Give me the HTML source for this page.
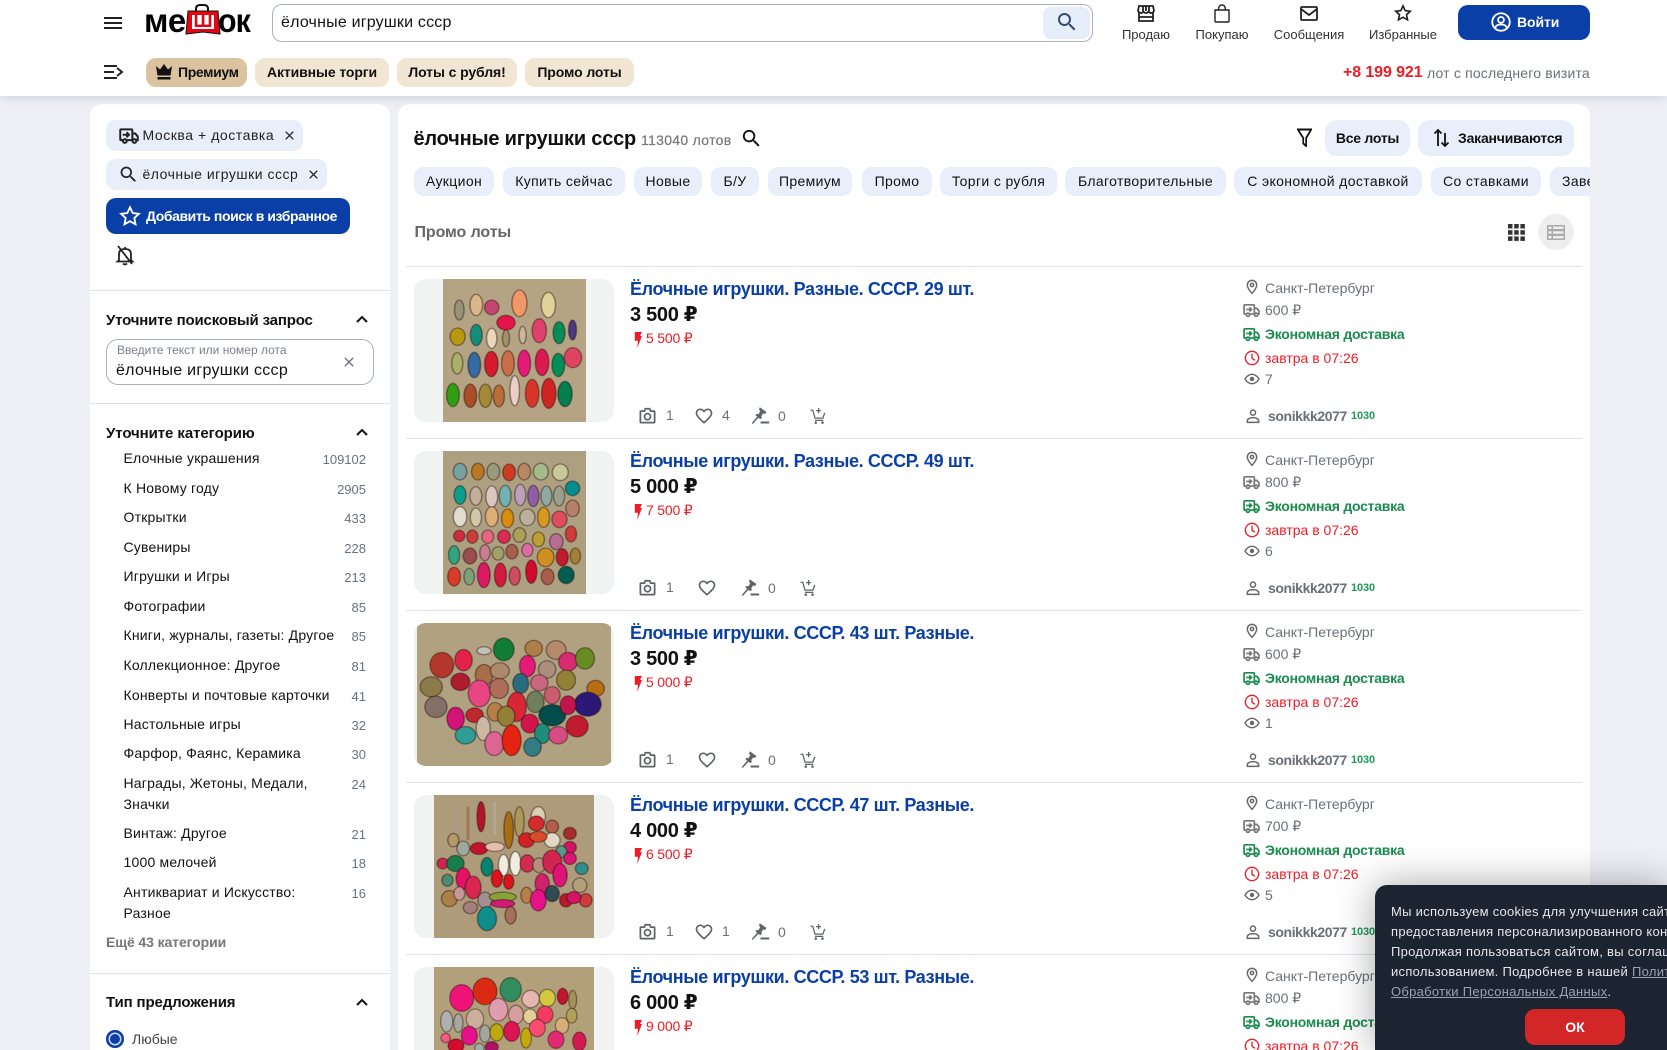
<!DOCTYPE html>
<html lang="ru"><head><meta charset="utf-8"><title>ёлочные игрушки ссср</title>
<style>
*{box-sizing:border-box}
html,body{margin:0;padding:0;width:1667px;height:1050px;overflow:hidden;background:#eef0f6;font-family:"Liberation Sans","DejaVu Sans",sans-serif;color:#111}
#p{position:relative;width:1667px;height:1050px;overflow:hidden}
.a,.t,.row>svg,svg.a{position:absolute}
.t{white-space:nowrap;line-height:20px;font-size:14px}
.b{font-weight:bold}
.hdr{position:absolute;left:0;top:0;width:1667px;height:96px;background:#fff;box-shadow:0 2px 10px rgba(30,40,70,.14);z-index:3}
.panel{position:absolute;background:#fff;border-radius:12px 12px 0 0}
.pill{position:absolute;border-radius:10px;height:29px;text-align:center;line-height:29px;font-size:14px;font-weight:bold;white-space:nowrap;letter-spacing:-.1px}
.sep{position:absolute;height:1px;background:#dfe2ec}
.chip{position:absolute;top:7px;height:29px;background:#e8effb;border-radius:10px;text-align:center;line-height:29px;font-size:14px;white-space:nowrap;letter-spacing:.36px}
.cat{left:123.500px;width:220px;white-space:normal;color:#111;letter-spacing:.2px}
.n{right:1301px;color:#6a7080;font-size:13px}
.row{position:absolute;left:0;width:1667px;height:172px;overflow:hidden}
.imgb{position:absolute;left:414px;top:13px;width:200px;height:143px;background:#f1f3f3;border-radius:12px;overflow:hidden}
.imgb svg{position:absolute;top:0;filter:saturate(1.15)}
.imgb ellipse{stroke:rgba(35,12,12,.4);stroke-width:4}
.ti{left:630px;top:12px;font-size:18px;font-weight:bold;color:#0b3fa8;line-height:22px;letter-spacing:-.37px}
.pr{left:630px;top:38px;font-size:20px;font-weight:bold;line-height:22px;letter-spacing:-.3px}
.old{left:646px;top:62px;color:#ee1c25;letter-spacing:-.2px}
.g{color:#6b6f76}
.c{left:1265px}
.un{left:1268px;top:140px;letter-spacing:-.4px}
.rt{left:1351px;top:140px;font-size:11px;font-weight:bold;color:#1d9a5a;letter-spacing:-.1px}
.ic{fill:none;stroke:#666;stroke-width:1.8}
.ck{left:16px;font-size:13px;color:#e5e7eb;letter-spacing:.28px}
</style></head><body><div id="p">
<svg width="0" height="0" style="position:absolute"><defs>
<symbol id="search" viewBox="0 0 24 24"><path fill="currentColor" d="M15.5 14h-.79l-.28-.27A6.47 6.47 0 0 0 16 9.5 6.5 6.5 0 1 0 9.5 16c1.61 0 3.09-.59 4.23-1.57l.27.28v.79l5 4.99L20.49 19l-4.99-5zm-6 0C7.01 14 5 11.99 5 9.5S7.01 5 9.5 5 14 7.01 14 9.5 11.99 14 9.5 14z"/></symbol>
<symbol id="heart" viewBox="0 0 24 24"><path fill="#5f6368" d="M16.5 3c-1.74 0-3.41.81-4.5 2.09C10.91 3.81 9.24 3 7.5 3 4.42 3 2 5.42 2 8.5c0 3.78 3.4 6.86 8.55 11.54L12 21.35l1.45-1.32C18.6 15.36 22 12.28 22 8.5 22 5.42 19.58 3 16.5 3zm-4.4 15.55l-.1.1-.1-.1C7.14 14.24 4 11.39 4 8.5 4 6.5 5.5 5 7.5 5c1.54 0 3.04.99 3.57 2.36h1.87C13.46 5.99 14.96 5 16.5 5c2 0 3.5 1.5 3.5 3.5 0 2.89-3.14 5.74-7.9 10.05z"/></symbol>
<symbol id="cam" viewBox="0 0 24 24"><g fill="none" stroke="#5f6368" stroke-width="2.200"><path d="M3 7.5a1 1 0 0 1 1-1h4l1.2-3h5.6l1.2 3h4a1 1 0 0 1 1 1V20a1 1 0 0 1-1 1H4a1 1 0 0 1-1-1z"/><circle cx="12" cy="13.5" r="3.8"/></g></symbol>
<symbol id="gavel" viewBox="0 0 24 24"><g fill="#5f6368"><path d="M11 1.5l8.5 6-1.8 2.6-2.2-.8-2.6 3.7 1 2-2.4 1.6-6-5 1.7-1.8 2 .7 2.4-3.8-1.4-2z"/><path d="M8.6 12.4l1.7 1.5L2.2 22.8 1 21.4z"/><rect x="12" y="19.5" width="11" height="2.6" rx=".5"/></g></symbol>
<symbol id="cart" viewBox="0 0 24 24"><g fill="none" stroke="#5f6368" stroke-width="1.7"><path d="M2 5h3l3 10.5h10.5l2.5-7"/><path d="M8 18.5h11M12.8 2v7M9.5 5.5h6.6"/></g><circle cx="9" cy="21.5" r="1.7" fill="#5f6368"/><circle cx="18" cy="21.5" r="1.7" fill="#5f6368"/></symbol>
<symbol id="bolt" viewBox="0 0 12 20"><path fill="#ee1c25" d="M2 0h9L8.5 5H11L5 20l1-9H2z"/></symbol>
<symbol id="pin" viewBox="0 0 24 24"><g fill="none" stroke="currentColor" stroke-width="2.200"><path d="M12 21.5s-7-7.2-7-12.5a7 7 0 0 1 14 0c0 5.300-7 12.500-7 12.500z"/><circle cx="12" cy="9" r="2.500"/></g></symbol>
<symbol id="truck" viewBox="0 0 24 24"><g fill="none" stroke="currentColor" stroke-width="2.400"><path d="M5 17H2.500a1 1 0 0 1-1-1V5a1 1 0 0 1 1-1H15a1 1 0 0 1 1 1v12H9"/><path d="M16 9h3.500l3 3.500V17H20.500M16 17h.5"/><circle cx="7" cy="18" r="2.300"/><circle cx="18.500" cy="18" r="2.300"/><path d="M4.500 10.500h7M9 7.500l3 3-3 3"/></g></symbol>
<symbol id="clock" viewBox="0 0 24 24"><g fill="none" stroke="currentColor" stroke-width="2"><circle cx="12" cy="12" r="10"/><path d="M12 5.500v7l4.500 3"/></g></symbol>
<symbol id="eye" viewBox="0 0 24 24"><path fill="none" stroke="currentColor" stroke-width="2" d="M1.500 12S5.500 5 12 5s10.500 7 10.500 7-4 7-10.500 7S1.500 12 1.500 12z"/><circle cx="12" cy="12" r="3.300" fill="currentColor"/></symbol>
<symbol id="user" viewBox="0 0 24 24"><g fill="none" stroke="currentColor" stroke-width="2.200"><circle cx="12" cy="7" r="3.800"/><path d="M3.500 21.500v-2.500c0-2.800 4.500-4.500 8.500-4.500s8.500 1.700 8.500 4.500v2.500z"/></g></symbol>
<symbol id="x" viewBox="0 0 24 24"><path fill="none" stroke="currentColor" stroke-width="2.400" d="M5 5l14 14M19 5L5 19"/></symbol>
<symbol id="chev" viewBox="0 0 12 8"><path fill="none" stroke="#111" stroke-width="2" d="M1 7l5-5 5 5"/></symbol>
</defs></svg>

<div class="panel" style="left:90px;top:104px;width:300px;height:946px"></div>
<div class="panel" style="left:398px;top:104px;width:1192px;height:946px"></div>

<!-- header -->
<div class="hdr">
<div class="a" style="left:104px;top:17px;width:18px;height:2px;background:#222;box-shadow:0 5px 0 #222,0 10px 0 #222"></div>
<div class="t b" style="left:144px;top:2px;font-size:33px;line-height:38px;letter-spacing:-.5px;color:#000;transform-origin:0 0">ме</div>
<div class="t b" style="left:218px;top:2px;font-size:33px;line-height:38px;letter-spacing:-1px;color:#000;transform:scaleX(.92);transform-origin:0 0">ок</div>
<svg class="a" style="left:184px;top:3px" width="38" height="33" viewBox="0 0 38 33"><path d="M12 9V6q0-4 4-4h4q4 0 4 4v3" fill="none" stroke="#111" stroke-width="2"/><path d="M4 8h30l2 23-17-2-17 2z" fill="#e30613" stroke="#111" stroke-width="1"/><rect x="8" y="12" width="22" height="14" fill="#fff"/><text x="19" y="24" text-anchor="middle" font-size="19" font-weight="bold" fill="#e30613" font-family="Liberation Sans, sans-serif">Ш</text></svg>

<div class="a" style="left:272px;top:4px;width:821px;height:38px;border:1px solid #aab0c0;border-radius:10px;background:#fff"></div>
<div class="t" style="left:281px;top:12px;font-size:16px;letter-spacing:.2px;line-height:22px">ёлочные игрушки ссср</div>
<div class="a" style="left:1043px;top:7px;width:47px;height:32px;background:#e6eefb;border-radius:8px"></div>
<svg class="a" style="left:1055px;top:10px;color:#334a70" width="24" height="24"><use href="#search"/></svg>

<svg class="a ic" style="left:1137px;top:5px;stroke:#222" width="18" height="17" viewBox="0 0 18 17"><path d="M2 1h14l1 5q-1 2-2.700 2t-2.600-1.500Q10.500 8 9 8T6.300 6.500Q5.500 8 3.700 8T1 6z"/><path d="M2 8v8h14V8M6 1v5M9 1v5M12 1v5M2 12h14"/></svg>
<svg class="a ic" style="left:1213px;top:4px;stroke:#222;stroke-width:1.400" width="18" height="19" viewBox="0 0 18 19"><path d="M2 6h14v11a1 1 0 0 1-1 1H3a1 1 0 0 1-1-1zM5.500 6q0-5 3.500-5t3.500 5"/></svg>
<svg class="a ic" style="left:1300px;top:6px;stroke:#222" width="18" height="15" viewBox="0 0 18 15"><rect x="1" y="1" width="16" height="13" rx="1"/><path d="M1 3l8 6 8-6"/></svg>
<svg class="a ic" style="left:1394px;top:4px;stroke:#222" width="18" height="18" viewBox="0 0 24 24"><path stroke-width="2.200" d="M12 2.500l2.900 6.300 6.800.8-5 4.700 1.300 6.800-6-3.400-6 3.400 1.300-6.800-5-4.700 6.800-.8z"/></svg>
<div class="t" style="left:1096px;width:100px;text-align:center;top:25px;font-size:13px;color:#333">Продаю</div>
<div class="t" style="left:1172px;width:100px;text-align:center;top:25px;font-size:13px;color:#333">Покупаю</div>
<div class="t" style="left:1259px;width:100px;text-align:center;top:25px;font-size:13px;color:#333">Сообщения</div>
<div class="t" style="left:1353px;width:100px;text-align:center;top:25px;font-size:13px;color:#333">Избранные</div>
<div class="a" style="left:1458px;top:5px;width:132px;height:35px;background:#0b3fa8;border-radius:10px"></div>
<svg class="a" style="left:1491px;top:12px" width="20" height="20" viewBox="0 0 24 24"><g fill="none" stroke="#fff" stroke-width="2.200"><circle cx="12" cy="12" r="10.500"/><circle cx="12" cy="9.500" r="3.500"/><path d="M5 19q1-4 7-4t7 4"/></g></svg>
<div class="t b" style="left:1517px;top:12px;color:#fff;letter-spacing:-.1px">Войти</div>

<svg class="a" style="left:104px;top:64px" width="20" height="16" viewBox="0 0 20 16"><path fill="none" stroke="#222" stroke-width="2" d="M0 2h13M0 8h10M0 14h13M13 4l5 4-5 4"/></svg>
<div class="pill" style="left:146px;top:58px;width:101px;background:#dcc3a0;text-align:left;padding-left:32px;letter-spacing:-.35px">Премиум</div>
<svg class="a" style="left:156px;top:64px" width="16" height="16" viewBox="0 0 16 16"><path fill="#111" d="M0 2l4 3.500L8 0l4 5.500L16 2l-1.500 9.500h-13zM1.500 13h13v2.500h-13z"/></svg>
<div class="pill" style="left:255px;top:58px;width:134px;background:#f1e5d4">Активные торги</div>
<div class="pill" style="left:397px;top:58px;width:120px;background:#f1e5d4">Лоты с рубля!</div>
<div class="pill" style="left:525px;top:58px;width:109px;background:#f1e5d4">Промо лоты</div>
<div class="t b" style="left:1343px;top:63px;font-size:16px;color:#ee1c25;letter-spacing:-.1px">+8 199 921</div>
<div class="t g" style="left:1427px;top:63px;letter-spacing:.18px">лот с последнего визита</div>
</div>

<!-- left panel content -->
<div class="a" style="left:106px;top:120px;width:197px;height:31px;background:#e8effb;border-radius:10px"></div>
<svg class="a" style="left:119px;top:126px;color:#222" width="20" height="20"><use href="#truck"/></svg>
<div class="t" style="left:142.500px;top:125px;color:#222;letter-spacing:.55px">Москва + доставка</div>
<svg class="a" style="left:283px;top:129px;color:#222" width="13" height="13"><use href="#x"/></svg>
<div class="a" style="left:106px;top:159px;width:221px;height:31px;background:#e8effb;border-radius:10px"></div>
<svg class="a" style="left:118px;top:164px;color:#222" width="21" height="21"><use href="#search"/></svg>
<div class="t" style="left:142.500px;top:164px;color:#222;letter-spacing:.5px">ёлочные игрушки ссср</div>
<svg class="a" style="left:307px;top:168px;color:#222" width="13" height="13"><use href="#x"/></svg>
<div class="a" style="left:106px;top:198px;width:244px;height:36px;background:#0b3fa8;border-radius:10px"></div>
<svg class="a" style="left:119px;top:205px" width="22" height="22" viewBox="0 0 24 24"><path fill="none" stroke="#fff" stroke-width="2" d="M12 2.500l2.900 6.300 6.800.8-5 4.700 1.300 6.800-6-3.400-6 3.400 1.300-6.800-5-4.700 6.800-.8z"/></svg>
<div class="t b" style="left:146px;top:206px;color:#fff;letter-spacing:-.42px">Добавить поиск в избранное</div>
<svg class="a" style="left:115px;top:245px" width="20" height="21" viewBox="0 0 20 21"><path fill="none" stroke="#222" stroke-width="1.800" d="M4 15V9q0-5 6-5t6 5v6l1.500 1.500h-15zM8 18.500q2 2 4 0M10 4V2M3 1l14 18"/></svg>

<div class="sep" style="left:90px;top:290px;width:300px"></div>
<div class="t b" style="left:106px;top:311px;font-size:15px;color:#111;letter-spacing:-.17px">Уточните поисковый запрос</div>
<svg class="a" style="left:356px;top:315px" width="12" height="8"><use href="#chev"/></svg>
<div class="a" style="left:106px;top:339px;width:268px;height:46px;border:1px solid #aab0c0;border-radius:12px"></div>
<div class="t" style="left:117px;top:340px;font-size:12px;color:#7a8090">Введите текст или номер лота</div>
<div class="t" style="left:116px;top:361px;font-size:16px;letter-spacing:.27px">ёлочные игрушки ссср</div>
<svg class="a" style="left:342px;top:355px;color:#6d7585" width="14" height="14"><use href="#x"/></svg>
<div class="sep" style="left:90px;top:403px;width:300px"></div>
<div class="t b" style="left:106px;top:424px;font-size:15px;letter-spacing:-.08px">Уточните категорию</div>
<svg class="a" style="left:356px;top:428px" width="12" height="8"><use href="#chev"/></svg>

<div class="t cat" style="top:448px">Елочные украшения</div><div class="t n" style="top:450px">109102</div>
<div class="t cat" style="top:478px">К Новому году</div><div class="t n" style="top:480px">2905</div>
<div class="t cat" style="top:507px">Открытки</div><div class="t n" style="top:509px">433</div>
<div class="t cat" style="top:537px">Сувениры</div><div class="t n" style="top:539px">228</div>
<div class="t cat" style="top:566px">Игрушки и Игры</div><div class="t n" style="top:568px">213</div>
<div class="t cat" style="top:596px">Фотографии</div><div class="t n" style="top:598px">85</div>
<div class="t cat" style="top:625px">Книги, журналы, газеты: Другое</div><div class="t n" style="top:627px">85</div>
<div class="t cat" style="top:655px">Коллекционное: Другое</div><div class="t n" style="top:657px">81</div>
<div class="t cat" style="top:685px">Конверты и почтовые карточки</div><div class="t n" style="top:687px">41</div>
<div class="t cat" style="top:714px">Настольные игры</div><div class="t n" style="top:716px">32</div>
<div class="t cat" style="top:743px">Фарфор, Фаянс, Керамика</div><div class="t n" style="top:745px">30</div>
<div class="t cat" style="top:773px;line-height:21px;width:214px">Награды, Жетоны, Медали,<br>Значки</div><div class="t n" style="top:775px">24</div>
<div class="t cat" style="top:823px">Винтаж: Другое</div><div class="t n" style="top:825px">21</div>
<div class="t cat" style="top:852px">1000 мелочей</div><div class="t n" style="top:854px">18</div>
<div class="t cat" style="top:882px;line-height:21px;width:214px">Антиквариат и Искусство:<br>Разное</div><div class="t n" style="top:884px">16</div>
<div class="t b" style="left:106px;top:932px;color:#777;letter-spacing:-.1px">Ещё 43 категории</div>
<div class="sep" style="left:90px;top:973px;width:300px"></div>
<div class="t b" style="left:106px;top:993px;font-size:15px;letter-spacing:-.12px">Тип предложения</div>
<svg class="a" style="left:356px;top:998px" width="12" height="8"><use href="#chev"/></svg>
<div class="a" style="left:106px;top:1030px;width:18px;height:18px;border-radius:50%;background:#0b3fa8;box-shadow:inset 0 0 0 2.500px #0b3fa8,inset 0 0 0 4px #cfdcf5"></div>
<div class="t" style="left:132px;top:1029px;color:#444">Любые</div>

<!-- main head -->
<div class="t b" style="left:413.500px;top:129px;font-size:20px;letter-spacing:-.2px">ёлочные игрушки ссср</div>
<div class="t b" style="left:641px;top:130px;color:#777;font-size:14px;font-weight:normal;-webkit-text-stroke:.2px #777;letter-spacing:.3px">113040 лотов</div>
<svg class="a" style="left:740px;top:127px;color:#111" width="23" height="23"><use href="#search"/></svg>
<svg class="a" style="left:1297px;top:128px" width="15" height="19" viewBox="0 0 18 19" preserveAspectRatio="none"><path fill="none" stroke="#111" stroke-width="2" d="M1 1.500h16L11 10v8l-3.500-2.500V10z"/></svg>
<div class="pill" style="left:1325px;top:120px;width:85px;height:36px;line-height:36px;background:#e8effb;border-radius:12px;letter-spacing:-.25px">Все лоты</div>
<div class="pill" style="left:1418px;top:120px;width:156px;height:36px;line-height:36px;background:#e8effb;border-radius:12px;text-align:left;padding-left:40px;letter-spacing:-.2px">Заканчиваются</div>
<svg class="a" style="left:1433px;top:128px" width="16" height="20" viewBox="0 0 16 20"><path fill="none" stroke="#111" stroke-width="1.800" d="M5 18V2M1.500 5.500L5 2l3.500 3.500M12 5v13M8.500 14.500L12 18l3.500-3.500"/></svg>

<div class="a" style="left:398px;top:160px;width:1192px;height:42px;overflow:hidden">
<div class="chip" style="left:16px;width:80px">Аукцион</div>
<div class="chip" style="left:105px;width:122px">Купить сейчас</div>
<div class="chip" style="left:236px;width:68px">Новые</div>
<div class="chip" style="left:313px;width:48px">Б/У</div>
<div class="chip" style="left:370px;width:84px">Премиум</div>
<div class="chip" style="left:464px;width:70px">Промо</div>
<div class="chip" style="left:542px;width:117px">Торги с рубля</div>
<div class="chip" style="left:667px;width:161px">Благотворительные</div>
<div class="chip" style="left:836px;width:188px">С экономной доставкой</div>
<div class="chip" style="left:1033px;width:110px">Со ставками</div>
<div class="chip" style="left:1152px;width:110px;text-align:left;padding-left:12px">Завершённые</div>
</div>

<div class="t b" style="left:414.500px;top:223px;font-size:16px;color:#666;letter-spacing:-.1px">Промо лоты</div>
<svg class="a" style="left:1508px;top:224px" width="17" height="17" viewBox="0 0 17 17"><g fill="#333"><rect width="4.500" height="4.500"/><rect x="6.200" width="4.500" height="4.500"/><rect x="12.400" width="4.500" height="4.500"/><rect y="6.200" width="4.500" height="4.500"/><rect x="6.200" y="6.200" width="4.500" height="4.500"/><rect x="12.400" y="6.200" width="4.500" height="4.500"/><rect y="12.400" width="4.500" height="4.500"/><rect x="6.200" y="12.400" width="4.500" height="4.500"/><rect x="12.400" y="12.400" width="4.500" height="4.500"/></g></svg>
<div class="a" style="left:1538px;top:214px;width:36px;height:36px;border-radius:18px;background:#eeeeee"></div>
<svg class="a" style="left:1547px;top:225px" width="18" height="15" viewBox="0 0 18 15"><g fill="#aaa"><path d="M0 0h18v15H0zM1.500 1.500V4h3V1.500zm4.500 0V4h10.500V1.500zM1.500 6.200v2.600h3V6.200zm4.500 0v2.600h10.500V6.200zM1.500 11v2.500h3V11zm4.500 0v2.500h10.500V11z" fill-rule="evenodd"/></g></svg>

<div class="sep" style="left:406px;top:266px;width:1176px"></div>

<!-- ROW 1 -->
<div class="row" style="top:266px">
<div class="imgb"><svg style="left:29px" width="143" height="143" viewBox="109 57 361 429" preserveAspectRatio="none"><rect x="109" y="57" width="361" height="429" fill="#b3a488"/><g>
<ellipse cx="150" cy="150" rx="12" ry="30" fill="#97937a"/><ellipse cx="193" cy="135" rx="16" ry="32" fill="#d4b890"/><ellipse cx="232" cy="142" rx="18" ry="22" fill="#b8486e"/><ellipse cx="302" cy="130" rx="19" ry="40" fill="#e89a70"/><ellipse cx="375" cy="135" rx="18" ry="38" fill="#ded2a0"/>
<ellipse cx="146" cy="230" rx="19" ry="26" fill="#b49a22"/><ellipse cx="193" cy="225" rx="15" ry="32" fill="#1f8a7a"/><ellipse cx="232" cy="235" rx="13" ry="30" fill="#e8d8c0"/><ellipse cx="268" cy="188" rx="23" ry="22" fill="#d01a4a"/><ellipse cx="268" cy="235" rx="9" ry="25" fill="#a09070"/><ellipse cx="310" cy="225" rx="9" ry="26" fill="#c8b8a0"/><ellipse cx="352" cy="212" rx="18" ry="36" fill="#d0456a"/><ellipse cx="402" cy="218" rx="15" ry="33" fill="#0f8a5a"/><ellipse cx="436" cy="210" rx="10" ry="30" fill="#4a3a7a"/>
<ellipse cx="145" cy="310" rx="14" ry="32" fill="#a8b070"/><ellipse cx="188" cy="315" rx="16" ry="38" fill="#3a6a9a"/><ellipse cx="231" cy="312" rx="17" ry="38" fill="#c02030"/><ellipse cx="273" cy="310" rx="16" ry="38" fill="#c07050"/><ellipse cx="314" cy="310" rx="16" ry="40" fill="#d02070"/><ellipse cx="359" cy="307" rx="17" ry="40" fill="#c82050"/><ellipse cx="400" cy="315" rx="16" ry="35" fill="#0f8a5a"/><ellipse cx="437" cy="293" rx="22" ry="30" fill="#d04860"/>
<ellipse cx="134" cy="405" rx="16" ry="35" fill="#3a9a20"/><ellipse cx="178" cy="407" rx="16" ry="35" fill="#a05030"/><ellipse cx="216" cy="407" rx="16" ry="35" fill="#a08a40"/><ellipse cx="250" cy="408" rx="14" ry="33" fill="#b07040"/><ellipse cx="290" cy="392" rx="12" ry="45" fill="#e8d0c8"/><ellipse cx="334" cy="400" rx="17" ry="42" fill="#c83a30"/><ellipse cx="376" cy="400" rx="18" ry="45" fill="#c02828"/><ellipse cx="417" cy="402" rx="18" ry="38" fill="#0f7a50"/></g></svg></div>
<div class="t ti">Ёлочные игрушки. Разные. СССР. 29 шт.</div>
<div class="t pr">3 500 ₽</div>
<svg class="a" style="left:633px;top:66px" width="10" height="16"><use href="#bolt"/></svg><div class="t old">5 500 ₽</div>
<svg class="a" style="left:638px;top:140px" width="19" height="19"><use href="#cam"/></svg><div class="t g" style="left:666px;top:139px">1</div>
<svg class="a" style="left:694px;top:140px" width="20" height="20"><use href="#heart"/></svg><div class="t g" style="left:722px;top:139px">4</div>
<svg class="a" style="left:751px;top:140px" width="19" height="19"><use href="#gavel"/></svg><div class="t g" style="left:778px;top:140px">0</div>
<svg class="a" style="left:809px;top:140px" width="18" height="19"><use href="#cart"/></svg>
<svg class="a" style="left:1244px;top:13px;color:#666" width="16" height="16"><use href="#pin"/></svg><div class="t g c" style="top:12px">Санкт-Петербург</div>
<svg class="a" style="left:1243px;top:36px;color:#777" width="17" height="17"><use href="#truck"/></svg><div class="t g c" style="top:34px">600 ₽</div>
<svg class="a" style="left:1243px;top:60px;color:#1a8c4e" width="17" height="17"><use href="#truck"/></svg><div class="t c b" style="top:58px;color:#1a8c4e;letter-spacing:-.25px">Экономная доставка</div>
<svg class="a" style="left:1244px;top:84px;color:#ee1c25" width="16" height="16"><use href="#clock"/></svg><div class="t c" style="top:82px;color:#ee1c25">завтра в 07:26</div>
<svg class="a" style="left:1244px;top:105px;color:#666" width="16" height="16"><use href="#eye"/></svg><div class="t g c" style="top:103px">7</div>
<svg class="a" style="left:1245px;top:142px;color:#666" width="16" height="16"><use href="#user"/></svg><div class="t g b un">sonikkk2077</div><div class="t rt">1030</div>
</div>
<div class="sep" style="left:406px;top:438px;width:1176px"></div>

<!-- ROW 2 -->
<div class="row" style="top:438px">
<div class="imgb"><svg style="left:29px" width="143" height="143" viewBox="109 573 361 429" preserveAspectRatio="none"><rect x="109" y="573" width="361" height="429" fill="#aba084"/><g>
<ellipse cx="152" cy="635" rx="17" ry="25" fill="#7aa0a0"/><ellipse cx="197" cy="635" rx="16" ry="25" fill="#b07a30"/><ellipse cx="236" cy="635" rx="16" ry="25" fill="#9a9a80"/><ellipse cx="276" cy="637" rx="16" ry="25" fill="#c0402a"/><ellipse cx="314" cy="635" rx="16" ry="25" fill="#b08a6a"/><ellipse cx="356" cy="635" rx="19" ry="25" fill="#a8b890"/><ellipse cx="405" cy="637" rx="20" ry="25" fill="#c8c8a0"/>
<ellipse cx="152" cy="705" rx="15" ry="28" fill="#1a9a8a"/><ellipse cx="192" cy="708" rx="15" ry="28" fill="#c0b0a0"/><ellipse cx="232" cy="710" rx="15" ry="32" fill="#d8c8c0"/><ellipse cx="266" cy="708" rx="15" ry="32" fill="#78b0b0"/><ellipse cx="304" cy="705" rx="14" ry="32" fill="#b8a0b8"/><ellipse cx="337" cy="708" rx="14" ry="32" fill="#8a60a0"/><ellipse cx="370" cy="708" rx="14" ry="30" fill="#90a8a0"/><ellipse cx="402" cy="708" rx="14" ry="30" fill="#9aa090"/><ellipse cx="436" cy="685" rx="18" ry="22" fill="#0f8a8a"/>
<ellipse cx="152" cy="770" rx="17" ry="30" fill="#e0dcd0"/><ellipse cx="192" cy="772" rx="14" ry="28" fill="#d0c8b0"/><ellipse cx="232" cy="770" rx="16" ry="30" fill="#d8b080"/><ellipse cx="272" cy="775" rx="15" ry="28" fill="#d09020"/><ellipse cx="322" cy="772" rx="19" ry="25" fill="#b8b0a0"/><ellipse cx="363" cy="772" rx="15" ry="30" fill="#d09a30"/><ellipse cx="403" cy="778" rx="19" ry="25" fill="#d05060"/><ellipse cx="436" cy="745" rx="17" ry="25" fill="#b08070"/>
<ellipse cx="150" cy="828" rx="14" ry="17" fill="#c03040"/><ellipse cx="183" cy="830" rx="14" ry="20" fill="#c04040"/><ellipse cx="222" cy="830" rx="15" ry="20" fill="#d86a80"/><ellipse cx="263" cy="830" rx="16" ry="20" fill="#c83050"/><ellipse cx="302" cy="825" rx="16" ry="22" fill="#a8a060"/><ellipse cx="350" cy="838" rx="15" ry="22" fill="#b8a040"/><ellipse cx="395" cy="845" rx="17" ry="24" fill="#b07090"/><ellipse cx="432" cy="822" rx="14" ry="24" fill="#c04040"/>
<ellipse cx="137" cy="885" rx="14" ry="28" fill="#3aa080"/><ellipse cx="177" cy="888" rx="17" ry="24" fill="#905050"/><ellipse cx="215" cy="878" rx="13" ry="24" fill="#c08090"/><ellipse cx="248" cy="880" rx="15" ry="20" fill="#a0a070"/><ellipse cx="283" cy="875" rx="15" ry="22" fill="#a06050"/><ellipse cx="322" cy="870" rx="14" ry="20" fill="#d070a0"/><ellipse cx="368" cy="892" rx="21" ry="28" fill="#c89030"/><ellipse cx="410" cy="892" rx="15" ry="26" fill="#b02030"/><ellipse cx="443" cy="888" rx="13" ry="24" fill="#a08040"/>
<ellipse cx="137" cy="950" rx="16" ry="28" fill="#c84030"/><ellipse cx="175" cy="950" rx="13" ry="25" fill="#80a080"/><ellipse cx="212" cy="945" rx="16" ry="38" fill="#c82060"/><ellipse cx="254" cy="945" rx="15" ry="36" fill="#c02040"/><ellipse cx="290" cy="948" rx="14" ry="28" fill="#c05060"/><ellipse cx="332" cy="935" rx="14" ry="35" fill="#c01030"/><ellipse cx="373" cy="950" rx="16" ry="24" fill="#a06050"/><ellipse cx="420" cy="945" rx="20" ry="26" fill="#0a5a50"/></g></svg></div>
<div class="t ti">Ёлочные игрушки. Разные. СССР. 49 шт.</div>
<div class="t pr">5 000 ₽</div>
<svg class="a" style="left:633px;top:66px" width="10" height="16"><use href="#bolt"/></svg><div class="t old">7 500 ₽</div>
<svg class="a" style="left:638px;top:140px" width="19" height="19"><use href="#cam"/></svg><div class="t g" style="left:666px;top:139px">1</div>
<svg class="a" style="left:697px;top:140px" width="20" height="20"><use href="#heart"/></svg>
<svg class="a" style="left:741px;top:140px" width="19" height="19"><use href="#gavel"/></svg><div class="t g" style="left:768px;top:140px">0</div>
<svg class="a" style="left:799px;top:140px" width="18" height="19"><use href="#cart"/></svg>
<svg class="a" style="left:1244px;top:13px;color:#666" width="16" height="16"><use href="#pin"/></svg><div class="t g c" style="top:12px">Санкт-Петербург</div>
<svg class="a" style="left:1243px;top:36px;color:#777" width="17" height="17"><use href="#truck"/></svg><div class="t g c" style="top:34px">800 ₽</div>
<svg class="a" style="left:1243px;top:60px;color:#1a8c4e" width="17" height="17"><use href="#truck"/></svg><div class="t c b" style="top:58px;color:#1a8c4e;letter-spacing:-.25px">Экономная доставка</div>
<svg class="a" style="left:1244px;top:84px;color:#ee1c25" width="16" height="16"><use href="#clock"/></svg><div class="t c" style="top:82px;color:#ee1c25">завтра в 07:26</div>
<svg class="a" style="left:1244px;top:105px;color:#666" width="16" height="16"><use href="#eye"/></svg><div class="t g c" style="top:103px">6</div>
<svg class="a" style="left:1245px;top:142px;color:#666" width="16" height="16"><use href="#user"/></svg><div class="t g b un">sonikkk2077</div><div class="t rt">1030</div>
</div>
<div class="sep" style="left:406px;top:610px;width:1176px"></div>

<!-- ROW 3 -->
<div class="row" style="top:610px">
<div class="imgb"><svg style="left:3px" width="194" height="143" viewBox="42 69 492 428" preserveAspectRatio="none"><rect x="42" y="69" width="492" height="428" rx="14" fill="#aea285"/><g>
<ellipse cx="105" cy="195" rx="30" ry="38" fill="#a83a30"/><ellipse cx="160" cy="180" rx="22" ry="32" fill="#d0284a"/><ellipse cx="212" cy="152" rx="18" ry="12" fill="#c0c0b8"/><ellipse cx="262" cy="148" rx="26" ry="34" fill="#1a7a3a"/><ellipse cx="338" cy="145" rx="22" ry="24" fill="#a88050"/><ellipse cx="395" cy="150" rx="25" ry="28" fill="#b08a70"/><ellipse cx="425" cy="185" rx="24" ry="28" fill="#c83070"/><ellipse cx="468" cy="175" rx="24" ry="32" fill="#6a8a30"/>
<ellipse cx="78" cy="260" rx="28" ry="30" fill="#8a7a50"/><ellipse cx="152" cy="245" rx="24" ry="26" fill="#a02030"/><ellipse cx="212" cy="225" rx="22" ry="32" fill="#a07050"/><ellipse cx="252" cy="212" rx="24" ry="24" fill="#a88a70"/><ellipse cx="322" cy="198" rx="20" ry="32" fill="#d02070"/><ellipse cx="372" cy="208" rx="22" ry="26" fill="#a89080"/><ellipse cx="420" cy="240" rx="24" ry="30" fill="#908040"/><ellipse cx="495" cy="265" rx="22" ry="24" fill="#b07020"/>
<ellipse cx="90" cy="320" rx="28" ry="32" fill="#80706a"/><ellipse cx="200" cy="280" rx="28" ry="40" fill="#d84a80"/><ellipse cx="250" cy="265" rx="24" ry="30" fill="#a87060"/><ellipse cx="305" cy="250" rx="20" ry="30" fill="#306a7a"/><ellipse cx="352" cy="248" rx="22" ry="24" fill="#c06a80"/><ellipse cx="385" cy="285" rx="20" ry="26" fill="#c06070"/><ellipse cx="475" cy="312" rx="34" ry="36" fill="#2a1a6a"/>
<ellipse cx="140" cy="355" rx="22" ry="34" fill="#c01a70"/><ellipse cx="188" cy="345" rx="22" ry="22" fill="#b02a30"/><ellipse cx="240" cy="335" rx="20" ry="28" fill="#b08050"/><ellipse cx="295" cy="320" rx="24" ry="44" fill="#c82a3a"/><ellipse cx="342" cy="305" rx="22" ry="32" fill="#708060"/><ellipse cx="385" cy="345" rx="34" ry="32" fill="#0a4a4a"/><ellipse cx="425" cy="315" rx="20" ry="28" fill="#b01a4a"/>
<ellipse cx="165" cy="405" rx="26" ry="26" fill="#3a9a90"/><ellipse cx="210" cy="385" rx="18" ry="36" fill="#c8b8a8"/><ellipse cx="268" cy="348" rx="22" ry="30" fill="#908040"/><ellipse cx="328" cy="370" rx="22" ry="28" fill="#c01a4a"/><ellipse cx="360" cy="400" rx="20" ry="30" fill="#2a8a7a"/><ellipse cx="400" cy="405" rx="24" ry="26" fill="#c85080"/><ellipse cx="448" cy="378" rx="28" ry="32" fill="#b02030"/>
<ellipse cx="238" cy="430" rx="24" ry="36" fill="#d06a90"/><ellipse cx="282" cy="420" rx="24" ry="46" fill="#d02818"/><ellipse cx="335" cy="440" rx="22" ry="28" fill="#3a7a80"/></g></svg></div>
<div class="t ti">Ёлочные игрушки. СССР. 43 шт. Разные.</div>
<div class="t pr">3 500 ₽</div>
<svg class="a" style="left:633px;top:66px" width="10" height="16"><use href="#bolt"/></svg><div class="t old">5 000 ₽</div>
<svg class="a" style="left:638px;top:140px" width="19" height="19"><use href="#cam"/></svg><div class="t g" style="left:666px;top:139px">1</div>
<svg class="a" style="left:697px;top:140px" width="20" height="20"><use href="#heart"/></svg>
<svg class="a" style="left:741px;top:140px" width="19" height="19"><use href="#gavel"/></svg><div class="t g" style="left:768px;top:140px">0</div>
<svg class="a" style="left:799px;top:140px" width="18" height="19"><use href="#cart"/></svg>
<svg class="a" style="left:1244px;top:13px;color:#666" width="16" height="16"><use href="#pin"/></svg><div class="t g c" style="top:12px">Санкт-Петербург</div>
<svg class="a" style="left:1243px;top:36px;color:#777" width="17" height="17"><use href="#truck"/></svg><div class="t g c" style="top:34px">600 ₽</div>
<svg class="a" style="left:1243px;top:60px;color:#1a8c4e" width="17" height="17"><use href="#truck"/></svg><div class="t c b" style="top:58px;color:#1a8c4e;letter-spacing:-.25px">Экономная доставка</div>
<svg class="a" style="left:1244px;top:84px;color:#ee1c25" width="16" height="16"><use href="#clock"/></svg><div class="t c" style="top:82px;color:#ee1c25">завтра в 07:26</div>
<svg class="a" style="left:1244px;top:105px;color:#666" width="16" height="16"><use href="#eye"/></svg><div class="t g c" style="top:103px">1</div>
<svg class="a" style="left:1245px;top:142px;color:#666" width="16" height="16"><use href="#user"/></svg><div class="t g b un">sonikkk2077</div><div class="t rt">1030</div>
</div>
<div class="sep" style="left:406px;top:782px;width:1176px"></div>

<!-- ROW 4 -->
<div class="row" style="top:782px">
<div class="imgb"><svg style="left:20px" width="160" height="143" viewBox="86 585 405 428" preserveAspectRatio="none"><rect x="86" y="585" width="405" height="428" fill="#ab9b7e"/><g>
<rect x="140" y="620" width="8" height="90" fill="#a89a88"/><rect x="168" y="620" width="8" height="100" fill="#9a7a60"/><ellipse cx="205" cy="650" rx="10" ry="45" fill="#a01a2a"/><rect x="236" y="605" width="7" height="100" fill="#b0a898"/><ellipse cx="275" cy="690" rx="12" ry="55" fill="#a07020"/><ellipse cx="302" cy="665" rx="12" ry="45" fill="#a89860"/><ellipse cx="350" cy="650" rx="18" ry="30" fill="#d8d0b8"/>
<ellipse cx="345" cy="670" rx="20" ry="22" fill="#c03030"/><ellipse cx="385" cy="680" rx="16" ry="20" fill="#a86050"/><ellipse cx="430" cy="700" rx="16" ry="18" fill="#9a3030"/><ellipse cx="385" cy="720" rx="20" ry="22" fill="#e0d8c8"/><ellipse cx="430" cy="742" rx="16" ry="18" fill="#c01a60"/><ellipse cx="408" cy="755" rx="14" ry="18" fill="#5a9a8a"/>
<ellipse cx="135" cy="720" rx="14" ry="20" fill="#b09a70"/><ellipse cx="160" cy="745" rx="16" ry="22" fill="#a0a8a0"/><ellipse cx="200" cy="745" rx="22" ry="18" fill="#b01a30"/><ellipse cx="240" cy="740" rx="24" ry="14" fill="#e0c0b0"/><ellipse cx="320" cy="720" rx="20" ry="22" fill="#c02828"/><ellipse cx="350" cy="710" rx="22" ry="16" fill="#c85030"/>
<ellipse cx="108" cy="790" rx="14" ry="16" fill="#c02a50"/><ellipse cx="140" cy="790" rx="22" ry="24" fill="#207a50"/><ellipse cx="220" cy="800" rx="15" ry="28" fill="#108070"/><ellipse cx="262" cy="795" rx="13" ry="32" fill="#f0ece0"/><ellipse cx="292" cy="790" rx="14" ry="36" fill="#f0ece0"/><ellipse cx="322" cy="790" rx="18" ry="26" fill="#c03050"/><ellipse cx="352" cy="795" rx="16" ry="22" fill="#b09080"/><ellipse cx="385" cy="785" rx="24" ry="35" fill="#c02a50"/><ellipse cx="430" cy="775" rx="16" ry="18" fill="#c81a70"/><ellipse cx="460" cy="805" rx="16" ry="18" fill="#3a8a8a"/>
<ellipse cx="120" cy="840" rx="14" ry="18" fill="#508a70"/><ellipse cx="160" cy="835" rx="18" ry="32" fill="#d01a60"/><ellipse cx="185" cy="862" rx="20" ry="34" fill="#c82a50"/><ellipse cx="245" cy="835" rx="14" ry="26" fill="#c81a20"/><ellipse cx="275" cy="845" rx="13" ry="22" fill="#c81a20"/><ellipse cx="360" cy="850" rx="18" ry="30" fill="#c02868"/><ellipse cx="405" cy="825" rx="18" ry="35" fill="#c81a70"/><ellipse cx="455" cy="855" rx="18" ry="22" fill="#b0a080"/>
<ellipse cx="125" cy="895" rx="20" ry="24" fill="#a88050"/><ellipse cx="150" cy="880" rx="14" ry="20" fill="#c09a98"/><ellipse cx="178" cy="922" rx="18" ry="18" fill="#a08080"/><ellipse cx="215" cy="900" rx="18" ry="24" fill="#a09090"/><ellipse cx="260" cy="890" rx="34" ry="14" fill="#8aa040"/><ellipse cx="260" cy="910" rx="30" ry="12" fill="#c02070"/><ellipse cx="320" cy="885" rx="14" ry="24" fill="#b08050"/><ellipse cx="350" cy="900" rx="20" ry="32" fill="#d01a80"/><ellipse cx="385" cy="880" rx="18" ry="24" fill="#304a50"/><ellipse cx="420" cy="900" rx="16" ry="20" fill="#a82030"/><ellipse cx="470" cy="900" rx="16" ry="20" fill="#c04040"/><ellipse cx="440" cy="892" rx="18" ry="18" fill="#c01a60"/>
<ellipse cx="220" cy="955" rx="24" ry="36" fill="#1a8a88"/><ellipse cx="280" cy="945" rx="14" ry="26" fill="#a07060"/></g></svg></div>
<div class="t ti">Ёлочные игрушки. СССР. 47 шт. Разные.</div>
<div class="t pr">4 000 ₽</div>
<svg class="a" style="left:633px;top:66px" width="10" height="16"><use href="#bolt"/></svg><div class="t old">6 500 ₽</div>
<svg class="a" style="left:638px;top:140px" width="19" height="19"><use href="#cam"/></svg><div class="t g" style="left:666px;top:139px">1</div>
<svg class="a" style="left:694px;top:140px" width="20" height="20"><use href="#heart"/></svg><div class="t g" style="left:722px;top:139px">1</div>
<svg class="a" style="left:751px;top:140px" width="19" height="19"><use href="#gavel"/></svg><div class="t g" style="left:778px;top:140px">0</div>
<svg class="a" style="left:809px;top:140px" width="18" height="19"><use href="#cart"/></svg>
<svg class="a" style="left:1244px;top:13px;color:#666" width="16" height="16"><use href="#pin"/></svg><div class="t g c" style="top:12px">Санкт-Петербург</div>
<svg class="a" style="left:1243px;top:36px;color:#777" width="17" height="17"><use href="#truck"/></svg><div class="t g c" style="top:34px">700 ₽</div>
<svg class="a" style="left:1243px;top:60px;color:#1a8c4e" width="17" height="17"><use href="#truck"/></svg><div class="t c b" style="top:58px;color:#1a8c4e;letter-spacing:-.25px">Экономная доставка</div>
<svg class="a" style="left:1244px;top:84px;color:#ee1c25" width="16" height="16"><use href="#clock"/></svg><div class="t c" style="top:82px;color:#ee1c25">завтра в 07:26</div>
<svg class="a" style="left:1244px;top:105px;color:#666" width="16" height="16"><use href="#eye"/></svg><div class="t g c" style="top:103px">5</div>
<svg class="a" style="left:1245px;top:142px;color:#666" width="16" height="16"><use href="#user"/></svg><div class="t g b un">sonikkk2077</div><div class="t rt">1030</div>
</div>
<div class="sep" style="left:406px;top:954px;width:1176px"></div>

<!-- ROW 5 -->
<div class="row" style="top:954px;height:96px">
<div class="imgb" style="height:83px;border-radius:12px 12px 0 0"><svg style="left:20px" width="160" height="83" viewBox="72 22 480 249" preserveAspectRatio="none"><rect x="72" y="22" width="480" height="249" fill="#b0a080"/><g>
<ellipse cx="155" cy="115" rx="36" ry="40" fill="#d81a70"/><ellipse cx="225" cy="95" rx="36" ry="40" fill="#c8301a"/><ellipse cx="302" cy="90" rx="32" ry="36" fill="#3a8a60"/><ellipse cx="362" cy="118" rx="26" ry="26" fill="#e0b8b0"/><ellipse cx="412" cy="115" rx="24" ry="26" fill="#d0c850"/><ellipse cx="458" cy="110" rx="16" ry="24" fill="#b01a30"/><ellipse cx="488" cy="120" rx="12" ry="28" fill="#a09060"/>
<ellipse cx="110" cy="185" rx="18" ry="32" fill="#b0b0b0"/><ellipse cx="145" cy="190" rx="14" ry="28" fill="#a8a8a0"/><ellipse cx="195" cy="178" rx="26" ry="30" fill="#c8b0a0"/><ellipse cx="265" cy="150" rx="28" ry="34" fill="#d8a0b0"/><ellipse cx="318" cy="165" rx="22" ry="28" fill="#d0a0a0"/><ellipse cx="360" cy="170" rx="20" ry="22" fill="#e0d0a0"/><ellipse cx="405" cy="165" rx="24" ry="26" fill="#e04060"/><ellipse cx="485" cy="168" rx="16" ry="22" fill="#b0a060"/><ellipse cx="456" cy="198" rx="20" ry="24" fill="#d0b080"/><ellipse cx="382" cy="205" rx="24" ry="26" fill="#e85070"/>
<ellipse cx="178" cy="228" rx="24" ry="28" fill="#d01880"/><ellipse cx="225" cy="222" rx="16" ry="26" fill="#a0a8a0"/><ellipse cx="260" cy="218" rx="20" ry="26" fill="#b8a820"/><ellipse cx="305" cy="215" rx="24" ry="30" fill="#c81a50"/><ellipse cx="348" cy="235" rx="16" ry="30" fill="#c0a820"/><ellipse cx="438" cy="240" rx="24" ry="26" fill="#d03070"/><ellipse cx="508" cy="245" rx="20" ry="28" fill="#c02050"/><ellipse cx="107" cy="235" rx="14" ry="14" fill="#e06080"/><ellipse cx="138" cy="258" rx="24" ry="20" fill="#c01030"/><ellipse cx="245" cy="262" rx="20" ry="16" fill="#a01860"/><ellipse cx="208" cy="265" rx="14" ry="14" fill="#a0b0a8"/></g></svg></div>
<div class="t ti">Ёлочные игрушки. СССР. 53 шт. Разные.</div>
<div class="t pr">6 000 ₽</div>
<svg class="a" style="left:633px;top:66px" width="10" height="16"><use href="#bolt"/></svg><div class="t old">9 000 ₽</div>
<svg class="a" style="left:1244px;top:13px;color:#666" width="16" height="16"><use href="#pin"/></svg><div class="t g c" style="top:12px">Санкт-Петербург</div>
<svg class="a" style="left:1243px;top:36px;color:#777" width="17" height="17"><use href="#truck"/></svg><div class="t g c" style="top:34px">800 ₽</div>
<svg class="a" style="left:1243px;top:60px;color:#1a8c4e" width="17" height="17"><use href="#truck"/></svg><div class="t c b" style="top:58px;color:#1a8c4e;letter-spacing:-.25px">Экономная доставка</div>
<svg class="a" style="left:1244px;top:84px;color:#ee1c25" width="16" height="12" viewBox="0 0 24 18" preserveAspectRatio="xMidYMin slice"><use href="#clock" width="24" height="24"/></svg><div class="t c" style="top:82px;color:#ee1c25;height:14px;overflow:hidden">завтра в 07:26</div>
</div>

<!-- cookie -->
<div class="a" style="left:1375px;top:885px;width:292px;height:165px;background:#1c2331;border-radius:12px 0 0 0;box-shadow:0 0 40px rgba(0,0,0,.35);z-index:5;overflow:hidden">
<div class="t ck" style="top:17px">Мы используем cookies для улучшения сайта</div>
<div class="t ck" style="top:37px">предоставления персонализированного контента</div>
<div class="t ck" style="top:57px">Продолжая пользоваться сайтом, вы соглашаетесь</div>
<div class="t ck" style="top:77px">использованием. Подробнее в нашей <span style="color:#9ca3af;text-decoration:underline">Политике</span></div>
<div class="t ck" style="top:97px"><span style="color:#9ca3af;text-decoration:underline">Обработки Персональных Данных</span>.</div>
<div class="a" style="left:150px;top:124px;width:100px;height:36px;background:#d32626;border-radius:10px;text-align:center;line-height:36px;font-size:14px;font-weight:bold;color:#fff">ОК</div>
</div>
</div></body></html>
